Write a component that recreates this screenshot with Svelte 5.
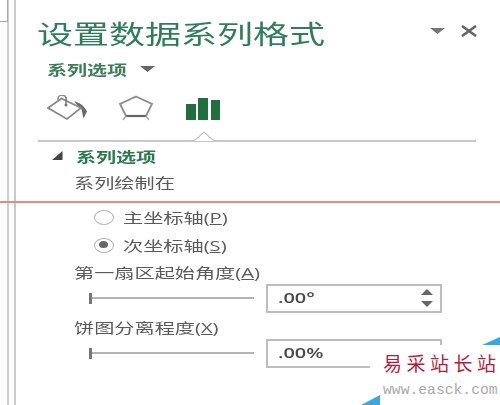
<script>
  const radios = [
    { label: '主坐标轴(', key: 'P', on: false },
    { label: '次坐标轴(', key: 'S', on: true }
  ];
  const fields = [
    { label: '第一扇区起始角度(', key: 'A', value: '.00°', spin: true },
    { label: '饼图分离程度(', key: 'X', value: '.00%', spin: false }
  ];
</script>

<div class="page">
  <aside class="rail">
    <div class="tab"></div>
  </aside>
  <main class="panel">
    <header class="head">
      <h1 class="wide">设置数据系列格式</h1>
      <div class="win">
        <svg width="17" height="8" viewBox="0 0 17 8"><path d="M1 1h15L8.5 7z" fill="#777"/></svg>
        <svg width="18" height="12" viewBox="0 0 18 12"><path d="M2 1l14 10M16 1L2 11" stroke="#666" stroke-width="2.6" fill="none"/></svg>
      </div>
    </header>
    <div class="sub">
      <span class="wide subtext">系列选项</span>
      <svg width="17" height="8" viewBox="0 0 17 8"><path d="M1 1h15L8.5 7z" fill="#666"/></svg>
    </div>
    <div class="icons">
      <svg class="ic" width="42" height="26" viewBox="0 0 42 26">
        <path d="M27 6.500c5 .5 10 4 13 10l-3.500 7-2-9z" fill="#6b6b6b"/>
        <path d="M1 13L14.500 3.500 34 13 20 24z" fill="#fff" stroke="#8a8a8a" stroke-width="1.8"/>
        <path d="M11 6V4a4 3.200 0 0 1 8-1" fill="none" stroke="#8a8a8a" stroke-width="1.4"/>
        <path d="M19 2v7" stroke="#777" stroke-width="1.5"/>
        <circle cx="19" cy="10" r="1.500" fill="#777"/>
      </svg>
      <svg class="ic" width="36" height="26" viewBox="0 0 36 26">
        <path d="M18 1.500l16 7.500-6 12H8L2 9z" fill="#fff" stroke="#8c8c8c" stroke-width="1.8"/>
        <path d="M8 21h20" stroke="#666" stroke-width="2.2"/>
        <path d="M8 21l-3 4M28 21l3 4" stroke="#aaa" stroke-width="1.6"/>
      </svg>
      <svg class="ic bars" width="34" height="23" viewBox="0 0 34 23">
        <path d="M0 7h10v16H0zM12 1h10v22H12zM25 3h9v20h-9z" fill="#1f6f3f"/>
      </svg>
    </div>
    <div class="rule">
      <svg class="notch" width="26" height="11" viewBox="0 0 26 11"><path d="M0 10h3L13 1l10 9h3" fill="#fff" stroke="#c4c4c4" stroke-width="1.2"/></svg>
    </div>
    <div class="sec">
      <svg width="11" height="9" viewBox="0 0 11 9"><path d="M10.500 0v9H0z" fill="#444"/></svg>
      <span class="wide sectext">系列选项</span>
    </div>
    <div class="row plain"><span class="wide body">系列绘制在</span></div>
    <div class="radios">
      {#each radios as r}
        <div class="radio">
          <span class="dot" class:on={r.on}></span>
          <span class="wide body">{r.label}<u>{r.key}</u>)</span>
        </div>
      {/each}
    </div>
    {#each fields as f}
      <div class="field">
        <div class="row lbl"><span class="wide body">{f.label}<u>{f.key}</u>)</span></div>
        <div class="ctl">
          <span class="tick"></span>
          <span class="track"></span>
          <div class="input">
            <span class="val">{f.value}</span>
            {#if f.spin}
              <span class="spin">
                <svg width="12" height="6" viewBox="0 0 12 6"><path d="M0 6h12L6 0z" fill="#666"/></svg>
                <svg width="12" height="6" viewBox="0 0 12 6"><path d="M0 0h12L6 6z" fill="#666"/></svg>
              </span>
            {/if}
          </div>
        </div>
      </div>
    {/each}
  </main>

  <div class="redline"></div>

  <div class="mark">
    <div class="cn">易采站长站</div>
    <div class="url">www.easck.com</div>
  </div>
  <div class="tri t1"></div>
  <div class="tri t2"></div>
</div>

<style>
  :global(body) { margin: 0; background: #fff; }
  .page {
    position: relative;
    width: 500px;
    height: 405px;
    overflow: hidden;
    display: flex;
    background: #fff;
    font-family: "Open Sans", "Noto Sans CJK SC", sans-serif;
    color: #555;
  }
  .rail {
    width: 16px;
    margin-right: -1px;
    flex: none;
    box-sizing: border-box;
    border-right: 2px solid #c9c9c9;
    position: relative;
  }
  .rail::before {
    content: "";
    display: block;
    width: 9px;
    height: 100%;
    box-sizing: border-box;
    border-right: 2px solid #cfcfcf;
  }
  .tab {
    position: absolute;
    top: -1px;
    left: 0;
    width: 8px;
    height: 23px;
    box-sizing: border-box;
    border: 1px solid #aaa;
    border-left: 0;
    background: #fff;
  }
  .panel {
    flex: 1;
    min-width: 0;
    filter: blur(0.35px);
  }
  .wide {
    display: inline-block;
    transform-origin: 0 50%;
    white-space: nowrap;
  }
  .head {
    height: 58px;
    padding: 7px 22px 0 22px;
    display: flex;
    align-items: center;
    justify-content: space-between;
    box-sizing: border-box;
  }
  h1 {
    margin: 0;
    font-size: 26px;
    font-weight: 400;
    color: #2f7d5b;
    transform: scaleX(1.385);
  }
  .win {
    display: flex;
    align-items: center;
    gap: 14px;
    margin-top: -3px;
  }
  .sub {
    height: 24px;
    padding: 0 0 2px 32px;
    box-sizing: border-box;
    display: flex;
    align-items: center;
    gap: 11px;
  }
  .subtext {
    width: 81px;
    font-size: 14px;
    font-weight: 700;
    color: #3c7d5c;
    transform: scaleX(1.43);
    transform-origin: 0 50%;
  }
  .icons {
    height: 58px;
    padding: 13px 0 0 32px;
    box-sizing: border-box;
    display: flex;
    align-items: flex-start;
    gap: 29px;
  }
  .bars { margin: 2px 0 0 3px; }
  .rule {
    position: relative;
    margin: 0 24px 0 23px;
    height: 2px;
    background: #c8c8c8;
  }
  .notch {
    position: absolute;
    left: 153px;
    top: -9px;
  }
  .sec {
    height: 23px;
    margin-top: 2px;
    padding-left: 37px;
    box-sizing: border-box;
    display: flex;
    align-items: center;
    gap: 13px;
  }
  .sectext {
    font-size: 14px;
    font-weight: 700;
    color: #2b7a4f;
    transform: scaleX(1.43);
  }
  .row {
    height: 24px;
    padding-left: 59px;
    display: flex;
    align-items: center;
    box-sizing: border-box;
  }
  .plain { margin: 3px 0 9px; }
  .lbl { padding-top: 2px; }
  .body {
    font-size: 14px;
    color: #5a5a5a;
    transform: scaleX(1.44);
  }
  .radios { padding-left: 79px; }
  .radio {
    height: 28px;
    display: flex;
    align-items: center;
    gap: 9px;
  }
  .dot {
    width: 20px;
    height: 15px;
    border-radius: 50%;
    box-sizing: border-box;
    border: 1.5px solid #b5b5b5;
    position: relative;
    flex: none;
  }
  .dot.on::after {
    content: "";
    position: absolute;
    left: 4px;
    top: 2.500px;
    width: 9px;
    height: 7px;
    border-radius: 50%;
    background: #666;
  }
  .field { height: 55px; }
  .ctl {
    height: 30px;
    padding-left: 74px;
    display: flex;
    align-items: center;
  }
  .tick {
    width: 3px;
    height: 11px;
    background: #777;
    flex: none;
  }
  .track {
    width: 162px;
    height: 2px;
    background: #b4b4b4;
    flex: none;
  }
  .input {
    margin-left: 12px;
    width: 176px;
    height: 29px;
    box-sizing: border-box;
    border: 2px solid #bdbdbd;
    display: flex;
    align-items: center;
    justify-content: space-between;
    padding: 0 7px 0 10px;
    background: #fff;
    flex: none;
  }
  .val {
    font-size: 15px;
    color: #4a4a4a;
    font-weight: 600;
    display: inline-block;
    transform: scaleX(1.33);
    transform-origin: 0 50%;
    margin-top: -2px;
  }
  .spin {
    display: flex;
    flex-direction: column;
    gap: 6px;
  }
  .spin svg { display: block; }
  .redline {
    position: absolute;
    left: 0;
    right: 0;
    top: 201px;
    height: 2px;
    background: #e58a86;
  }
  .mark {
    position: absolute;
    left: 370px;
    top: 345px;
    width: 130px;
    height: 60px;
    background: #fff;
    box-sizing: border-box;
    padding: 6px 0 0 13px;
  }
  .cn {
    font-family: "Noto Sans CJK SC", serif;
    font-weight: 400;
    font-size: 19px;
    line-height: 24px;
    letter-spacing: 4.500px;
    color: #b81c3a;
    white-space: nowrap;
  }
  .url {
    margin-top: 7px;
    font-family: "Liberation Mono", monospace;
    font-size: 14.700px;
    line-height: 16px;
    color: #aaa;
    white-space: nowrap;
  }
  .tri { position: absolute; width: 0; height: 0; }
  .t1 {
    left: 361px;
    top: 395px;
    border-bottom: 10px solid #36a9e0;
    border-left: 19px solid transparent;
  }
  .t2 {
    left: 482px;
    top: 337px;
    border-bottom: 8px solid #36a9e0;
    border-left: 18px solid transparent;
  }
</style>
